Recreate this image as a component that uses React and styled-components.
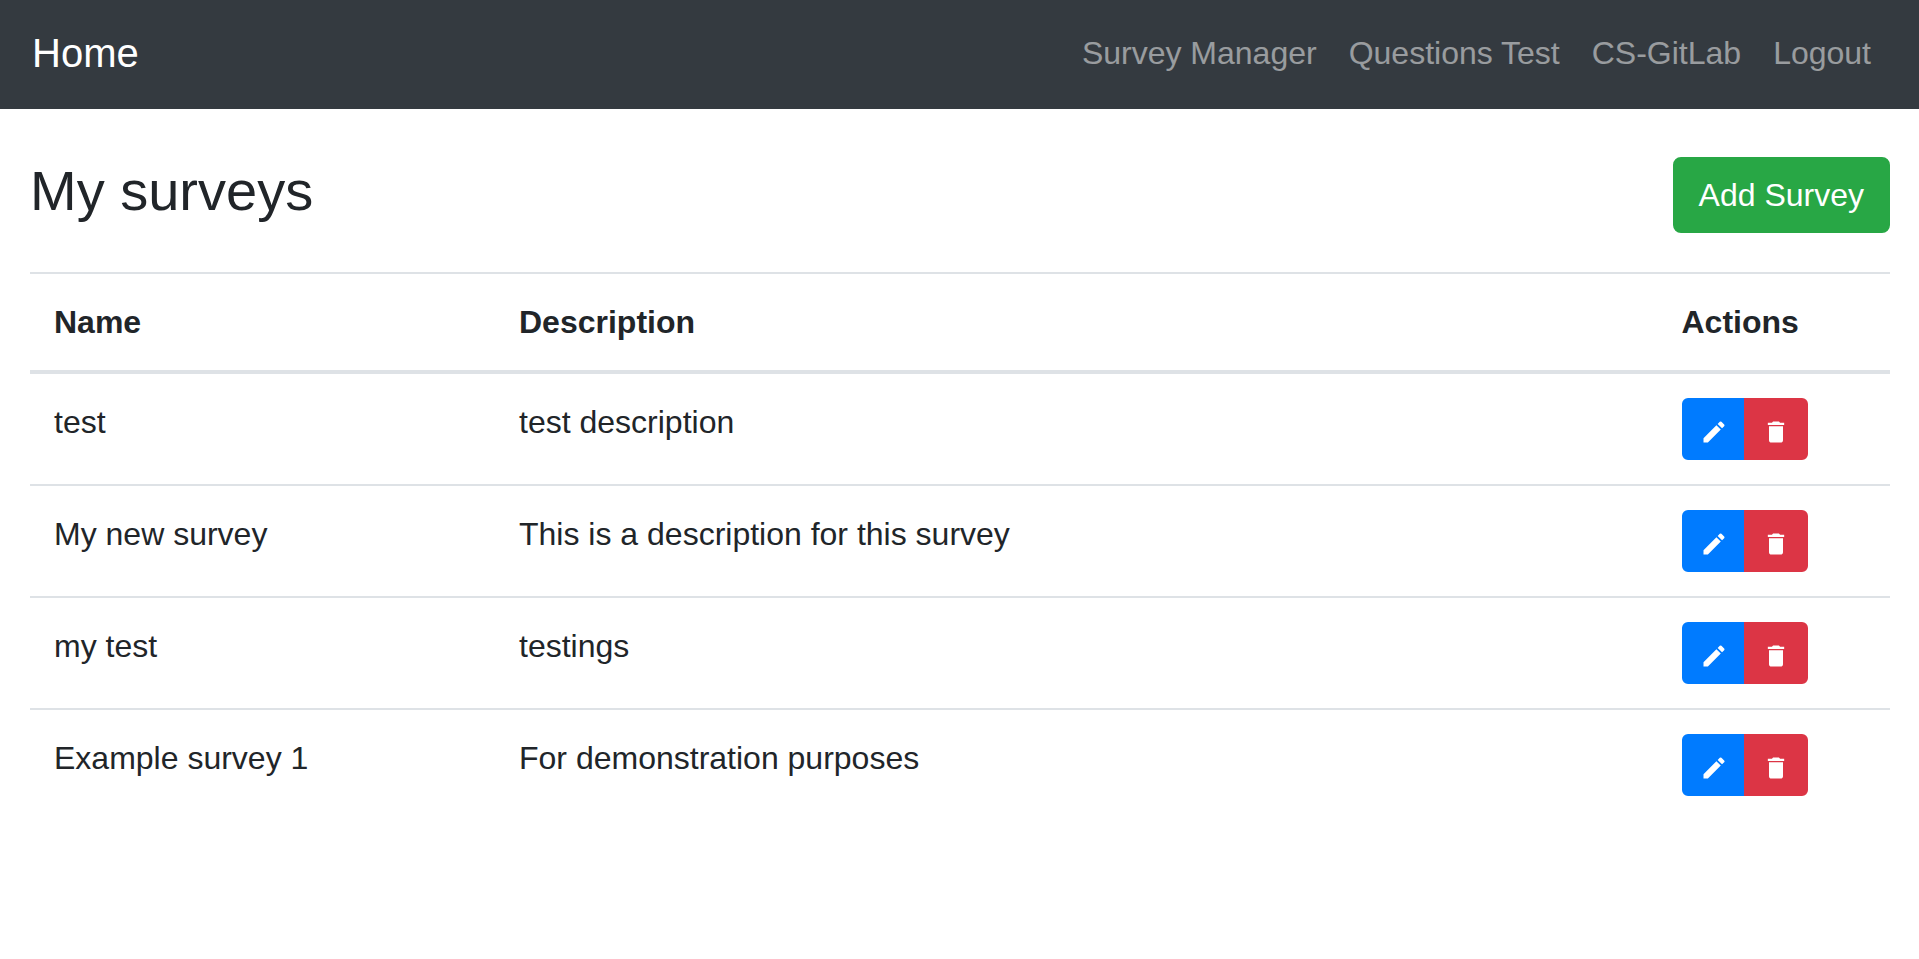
import React from "react";
import styled, { createGlobalStyle } from "styled-components";
import { MdDelete, MdEdit } from "react-icons/md";

const GlobalStyle = createGlobalStyle`
  *, *::before, *::after {
    box-sizing: border-box;
  }

  body {
    margin: 0;
    background: #fff;
    color: #212529;
    font-family: "Liberation Sans", Arial, sans-serif;
    font-size: 32px;
    line-height: 48px;
  }
`;

const Navbar = styled.nav`
  display: flex;
  align-items: center;
  justify-content: space-between;
  padding: 13px 32px 16px;
  background: #343a40;
`;

const Brand = styled.a`
  padding: 10px 0;
  color: #fff;
  font-size: 40px;
  line-height: 60px;
  text-decoration: none;
  white-space: nowrap;
`;

const NavList = styled.ul`
  display: flex;
  margin: 0;
  padding: 0;
  list-style: none;
`;

const NavLink = styled.a`
  display: block;
  padding: 16px;
  color: rgba(255, 255, 255, 0.5);
  text-decoration: none;
  white-space: nowrap;

  &:hover {
    color: rgba(255, 255, 255, 0.75);
  }
`;

const Main = styled.main`
  padding: 48px 29px 48px 30px;
`;

const PageHeader = styled.header`
  display: flex;
  align-items: flex-start;
  justify-content: space-between;
  margin-bottom: 39px;
`;

const Title = styled.h1`
  margin: 0;
  font-size: 56px;
  font-weight: 400;
  line-height: 67px;
`;

const AddButton = styled.button`
  padding: 12px 24px;
  border: 2px solid #28a745;
  border-radius: 8px;
  background: #28a745;
  color: #fff;
  font: inherit;
  cursor: pointer;
`;

const Table = styled.table`
  width: 100%;
  table-layout: fixed;
  border-collapse: separate;
  border-spacing: 0;
`;

const HeadCell = styled.th`
  width: ${({ $width }) => $width};
  padding: 24px;
  border-top: 2px solid #dee2e6;
  border-bottom: 4px solid #dee2e6;
  font-weight: 700;
  text-align: left;
`;

const Row = styled.tr`
  & + & > td {
    border-top: 2px solid #dee2e6;
  }
`;

const Cell = styled.td`
  padding: 24px;
  vertical-align: top;
`;

const ButtonGroup = styled.div`
  display: flex;
`;

const IconButton = styled.button`
  display: flex;
  padding: 18px 16px 12px;
  border: 2px solid ${({ $color }) => $color};
  background: ${({ $color }) => $color};
  color: #fff;
  font-size: 28px;
  cursor: pointer;

  &:first-child {
    border-radius: 6px 0 0 6px;
  }

  &:last-child {
    margin-left: -2px;
    border-radius: 0 6px 6px 0;
  }
`;

const links = ["Survey Manager", "Questions Test", "CS-GitLab", "Logout"];

const columns = [
  { label: "Name", width: "25%" },
  { label: "Description", width: "62.5%" },
  { label: "Actions", width: "12.5%" },
];

const surveys = [
  { name: "test", description: "test description" },
  { name: "My new survey", description: "This is a description for this survey" },
  { name: "my test", description: "testings" },
  { name: "Example survey 1", description: "For demonstration purposes" },
];

export default function App() {
  return (
    <>
      <GlobalStyle />
      <Navbar>
        <Brand href="#">Home</Brand>
        <NavList>
          {links.map((label) => (
            <li key={label}>
              <NavLink href="#">{label}</NavLink>
            </li>
          ))}
        </NavList>
      </Navbar>
      <Main>
        <PageHeader>
          <Title>My surveys</Title>
          <AddButton type="button">Add Survey</AddButton>
        </PageHeader>
        <Table>
          <thead>
            <tr>
              {columns.map(({ label, width }) => (
                <HeadCell key={label} scope="col" $width={width}>
                  {label}
                </HeadCell>
              ))}
            </tr>
          </thead>
          <tbody>
            {surveys.map(({ name, description }) => (
              <Row key={name}>
                <Cell>{name}</Cell>
                <Cell>{description}</Cell>
                <Cell>
                  <ButtonGroup role="group" aria-label={`Actions for ${name}`}>
                    <IconButton type="button" $color="#007bff" aria-label={`Edit ${name}`}>
                      <MdEdit />
                    </IconButton>
                    <IconButton type="button" $color="#dc3545" aria-label={`Delete ${name}`}>
                      <MdDelete />
                    </IconButton>
                  </ButtonGroup>
                </Cell>
              </Row>
            ))}
          </tbody>
        </Table>
      </Main>
    </>
  );
}
